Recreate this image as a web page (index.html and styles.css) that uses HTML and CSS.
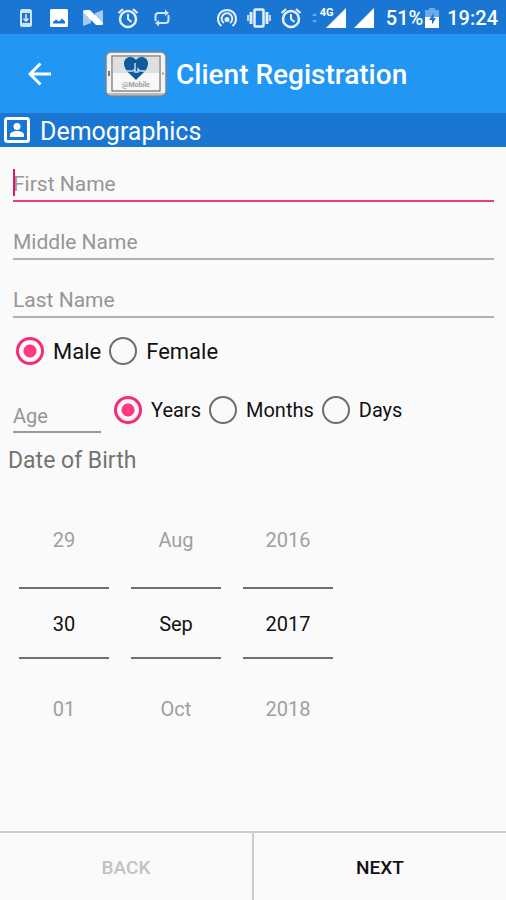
FILE: index.html
```html
<!DOCTYPE html>
<html lang="en">
<head>
<meta charset="utf-8">
<meta name="viewport" content="width=device-width, initial-scale=1">
<title>Client Registration</title>
<link rel="stylesheet" href="styles.css">
</head>
<body>
<div class="screen">
  <div class="status">
    <div class="status-left">
      <svg width="20" height="20" viewBox="0 0 20 20" fill="none" stroke="#d3e5f8"><rect x="5" y="2" width="10" height="16" rx="1.500" stroke-width="2"/><path d="M5 4h10M5 16h10" stroke-width="2"/><path d="M10 6v7M7.500 10.500l2.500 2.500 2.500-2.500" stroke-width="1.600"/></svg>
      <svg width="20" height="20" viewBox="0 0 20 20"><path fill="#fff" fill-rule="evenodd" d="M2.500 1h15A1.500 1.500 0 0 1 19 2.500v15a1.500 1.500 0 0 1-1.500 1.500h-15A1.500 1.500 0 0 1 1 17.500v-15A1.500 1.500 0 0 1 2.500 1zM4 15.500h12v-2l-3-3-3 3-3-2-3 2.500z"/></svg>
      <svg width="22" height="20" viewBox="0 0 22 20"><path fill="#a5cbf3" d="M1 3l8 4v8l-8 3zM13 5l8-3v15l-8-3z"/><path fill="#fff" d="M1 4q0-2 2-2h5l13 13q0 2-2 2h-5z"/></svg>
      <svg width="22" height="22" viewBox="0 0 22 22" fill="none" stroke="#e3effb" stroke-width="2.500"><circle cx="11" cy="12" r="8"/><path stroke-width="2" d="M11 7v5l3.500 3M1.500 6L6 2M20.500 6L16 2"/></svg>
      <svg width="20" height="20" viewBox="0 0 20 20" fill="none" stroke="#d3e5f8" stroke-width="2"><path d="M3.500 13V8q0-3 3-3H15M16.500 7v5q0 3-3 3H5"/><path fill="#d3e5f8" stroke="none" d="M13 1.500L17 5l-4 3zM7 12l-4 3 4 3.500z"/></svg>
    </div>
    <div class="status-right">
      <svg width="22" height="20" viewBox="0 0 22 20" fill="none" stroke="#e3effb" stroke-width="2"><path d="M5.500 18a9 9 0 1 1 11 0M8 15a5.300 5.300 0 1 1 6 0"/><circle cx="11" cy="11.500" r="2.500" fill="#e3effb" stroke="none"/></svg>
      <svg width="26" height="20" viewBox="0 0 26 20" fill="none" stroke="#e3effb" stroke-width="2.500"><rect x="8.500" y="1.500" width="9" height="17" rx="1"/><path stroke-width="3" d="M5 4v12M21 4v12"/><path stroke-width="2" stroke="#b9d6f3" d="M2 7v6M24 7v6"/></svg>
      <svg width="22" height="22" viewBox="0 0 22 22" fill="none" stroke="#e3effb" stroke-width="2.500"><circle cx="11" cy="12" r="8"/><path stroke-width="2" d="M11 7v5l3.500 3M1.500 6L6 2M20.500 6L16 2"/></svg>
      <div class="cell">
        <svg width="34" height="20" viewBox="0 0 34 20"><path fill="#6ba9e8" d="M0 8l2.500-3L5 8zM0 12l2.500 3L5 12z"/><path fill="#fff" d="M34 0v20H14z"/></svg>
        <span class="net">4G</span>
      </div>
      <svg width="20" height="20" viewBox="0 0 20 20"><path fill="#fff" d="M20 0v20H0z"/></svg>
      <div class="power">
        <span>51%</span>
        <svg width="14" height="20" viewBox="0 0 14 20"><path fill="#6ba9e8" d="M4 0h6v2h4v7H0V2h4z"/><path fill="#fff" d="M0 9h14v11H0z"/><path fill="#1976d2" d="M8.500 5L4 12h3v4.500L11 10H8.500z"/></svg>
      </div>
      <time>19:24</time>
    </div>
  </div>

  <header class="appbar">
    <button class="up" type="button" aria-label="Navigate up">
      <svg width="24" height="24" viewBox="0 0 24 24" fill="none" stroke="#fff" stroke-width="3"><path d="M23 12H2.500M12.500 1.500L2 12l10.500 10.500"/></svg>
    </button>
    <svg class="logo" width="62" height="46" viewBox="0 0 62 46">
      <rect x="1" y="1" width="60" height="44" rx="5" fill="#f3f3f1" stroke="#77828d" stroke-width="1.500"/>
      <path d="M3 43h56" stroke="#a7a7a5" stroke-width="1.500"/>
      <rect x="7" y="5" width="48" height="35" fill="#f8f8f7" stroke="#8b8b8b" stroke-width="1.500"/>
      <path fill="#dedfe0" d="M8 6h46v16H8z"/>
      <path fill="#0e5a9c" d="M31 29C25 23 19 19 19 12.500 19 5 28 4 31 9c3-5 12-4 12 3.500C43 19 37 23 31 29z"/>
      <path fill="none" stroke="#c5dcee" stroke-width="1.500" d="M21 20h7l2-2V12v9h3v-3l2 2h5"/>
      <rect x="3" y="20" width="2" height="5" fill="#777"/><circle cx="58" cy="22.500" r="1" fill="#888"/>
      <text x="31" y="36" text-anchor="middle" class="logo-text">@Mobile</text>
    </svg>
    <h1>Client Registration</h1>
  </header>

  <div class="section">
    <svg width="26" height="26" viewBox="0 0 26 26"><rect x="1.500" y="1.500" width="23" height="23" rx="2" fill="none" stroke="#fff" stroke-width="3"/><circle cx="13" cy="9.500" r="3.500" fill="#fff"/><path fill="#fff" d="M6 20v-2c0-3 4-4 7-4s7 1 7 4v2z"/></svg>
    <h2>Demographics</h2>
  </div>

  <form class="form" id="client">
    <div class="names">
      <div class="first"><input class="field active" type="text" placeholder="First Name" aria-label="First Name"><span class="caret"></span></div>
      <input class="field" type="text" placeholder="Middle Name" aria-label="Middle Name">
      <input class="field" type="text" placeholder="Last Name" aria-label="Last Name">
    </div>
    <div class="radios sex">
      <label><input type="radio" name="sex" checked>Male</label>
      <label><input type="radio" name="sex">Female</label>
    </div>
    <div class="age-row">
      <input class="field age" type="text" placeholder="Age" aria-label="Age">
      <div class="radios units">
        <label><input type="radio" name="unit" checked>Years</label>
        <label><input type="radio" name="unit">Months</label>
        <label><input type="radio" name="unit">Days</label>
      </div>
    </div>
    <h3>Date of Birth</h3>
    <div class="picker">
      <div class="wheel"><button type="button">29</button><input type="text" value="30" aria-label="Day"><button type="button">01</button></div>
      <div class="wheel"><button type="button">Aug</button><input type="text" value="Sep" aria-label="Month"><button type="button">Oct</button></div>
      <div class="wheel"><button type="button">2016</button><input type="text" value="2017" aria-label="Year"><button type="button">2018</button></div>
    </div>
  </form>

  <div class="footer">
    <button type="button" disabled>BACK</button>
    <button type="submit" form="client">NEXT</button>
  </div>
</div>
</body>
</html>
```
FILE: styles.css
```css
* { box-sizing: border-box; }
body { margin: 0; background: #fafafa; color: #111; font-family: Roboto, "Liberation Sans", sans-serif; }
svg { display: block; flex: none; }
button, input { font: inherit; color: inherit; }
button { border: 0; padding: 0; background: none; }
h1, h2, h3 { margin: 0; }
.screen { display: flex; flex-direction: column; min-height: 100vh; }

.status { display: flex; justify-content: space-between; align-items: center; height: 34px; padding: 1px 8px 0 16px; background: #1976d2; color: #fff; font-size: 20px; font-weight: 500; }
.status-left { display: flex; align-items: center; gap: 13px; }
.status-right { display: flex; align-items: center; gap: 10px; }
.status-right svg { margin-right: -2px; }
.cell { position: relative; margin-left: 2px; }
.net { position: absolute; left: 8px; top: -1px; font-size: 11px; line-height: 12px; font-weight: 700; }
.power { display: flex; align-items: center; gap: 2px; margin-left: 4px; }

.appbar { display: flex; align-items: center; height: 79px; padding-left: 28px; background: #2196f3; color: #fff; }
.logo { margin-left: 53px; }
.logo-text { font-size: 7px; font-weight: 700; fill: #a39c96; }
h1 { margin-left: 9px; padding-top: 2px; font-size: 28px; font-weight: 500; }

.section { display: flex; align-items: center; gap: 10px; height: 34px; padding-left: 4px; background: #1976d2; color: #fff; }
h2 { padding-top: 4px; font-size: 25px; font-weight: 400; line-height: 30px; }

.form { flex: 1; }
.names { display: flex; flex-direction: column; gap: 18px; padding: 15px 12px 0 13px; }
.first { position: relative; display: flex; }
.caret { position: absolute; left: 0; top: 7px; width: 2px; height: 27px; background: #e0156c; }
.field { width: 100%; height: 40px; padding: 6px 0 0; border: 0; border-bottom: 2px solid #b0b0b0; border-radius: 0; background: none; outline: 0; font-size: 21px; }
.field::placeholder { color: #969696; opacity: 1; }
.field.active { border-bottom-color: #f0387b; }

.radios { display: flex; gap: 8px; }
.radios label { display: flex; align-items: center; gap: 9px; }
.radios input { appearance: none; width: 28px; height: 28px; margin: 0; border: 2px solid #6e6e6e; border-radius: 50%; }
.radios input:checked { border: 3px solid #f72c78; background: radial-gradient(circle, #ff3b80 6px, transparent 7px); }
.sex { padding: 19px 16px 0; font-size: 22px; }
.age-row { display: flex; gap: 13px; padding: 28px 13px 0; }
.age { width: 88px; padding-top: 8px; border-bottom-color: #999; font-size: 20px; }
.units { align-items: flex-start; padding-top: 3px; font-size: 20px; }

h3 { padding: 14px 8px 0; color: #737373; font-size: 23px; font-weight: 400; line-height: 27px; }
.picker { display: flex; gap: 22px; padding: 31px 19px 36px; font-size: 20px; }
.wheel { display: flex; flex-direction: column; width: 90px; }
.wheel button { height: 70px; color: #a0a0a0; }
.wheel button:first-child { margin-bottom: 12px; }
.wheel button:last-child { margin-top: 15px; }
.wheel input { width: 100%; height: 72px; padding: 2px 0 0; border: 0; border-top: 2px solid #707070; border-bottom: 2px solid #707070; border-radius: 0; background: none; text-align: center; }

.footer { display: flex; height: 69px; border-top: 2px solid #ccc; font-size: 19px; font-weight: 500; }
.footer button { flex: 1; padding-top: 2px; }
.footer button:first-child { border-right: 2px solid #ccc; color: #c2c2c2; }
```
